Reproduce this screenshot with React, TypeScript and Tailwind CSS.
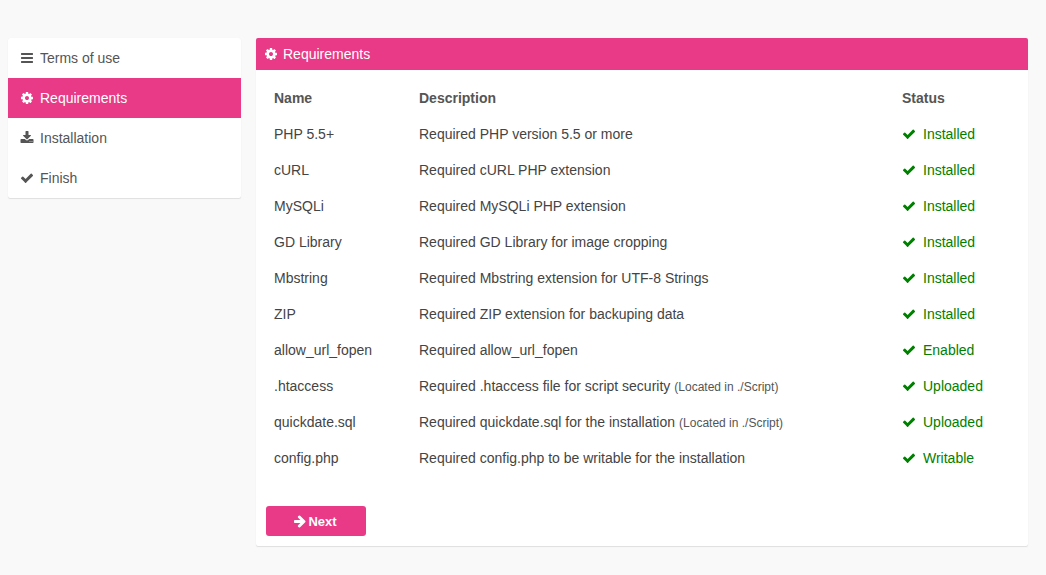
const icons = {
  bars: 'M1664 1344v128q0 26-19 45t-45 19h-1408q-26 0-45-19t-19-45v-128q0-26 19-45t45-19h1408q26 0 45 19t19 45zm0-512v128q0 26-19 45t-45 19h-1408q-26 0-45-19t-19-45v-128q0-26 19-45t45-19h1408q26 0 45 19t19 45zm0-512v128q0 26-19 45t-45 19h-1408q-26 0-45-19t-19-45v-128q0-26 19-45t45-19h1408q26 0 45 19t19 45z',
  cog: 'M1152 896q0-106-75-181t-181-75-181 75-75 181 75 181 181 75 181-75 75-181zm512-109v222q0 12-8 23t-20 13l-185 28q-19 54-39 91 35 50 107 138 10 12 10 25t-9 23q-27 37-99 108t-94 71q-12 0-26-9l-138-108q-44 23-91 38-16 136-29 186-7 28-36 28h-222q-14 0-24.5-8.5t-11.5-21.5l-28-184q-49-16-90-37l-141 107q-10 9-25 9-14 0-25-11-126-114-165-168-7-10-7-23 0-12 8-23 15-21 51-66.5t54-70.5q-27-50-41-99l-183-27q-13-2-21-12.5t-8-23.5v-222q0-12 8-23t19-13l186-28q14-46 39-92-40-57-107-138-10-12-10-24 0-10 9-23 26-36 98.5-107.5t94.5-71.5q13 0 26 10l138 107q44-23 91-38 16-136 29-186 7-28 36-28h222q14 0 24.5 8.5t11.5 21.5l28 184q49 16 90 37l142-107q9-9 24-9 13 0 25 10 129 119 165 170 7 8 7 22 0 12-8 23-15 21-51 66.5t-54 70.5q26 50 41 98l183 28q13 2 21 12.5t8 23.5z',
  download: 'M1344 1344q0-26-19-45t-45-19-45 19-19 45 19 45 45 19 45-19 19-45zm256 0q0-26-19-45t-45-19-45 19-19 45 19 45 45 19 45-19 19-45zm128-224v320q0 40-28 68t-68 28h-1472q-40 0-68-28t-28-68v-320q0-40 28-68t68-28h465l135 136q58 56 136 56t136-56l136-136h464q40 0 68 28t28 68zm-325-569q17 41-14 70l-448 448q-18 19-45 19t-45-19l-448-448q-31-29-14-70 17-39 59-39h256v-448q0-26 19-45t45-19h256q26 0 45 19t19 45v448h256q42 0 59 39z',
  check: 'M1671 566q0 40-28 68l-724 724-136 136q-28 28-68 28t-68-28l-136-136-362-362q-28-28-28-68t28-68l136-136q28-28 68-28t68 28l294 295 656-657q28-28 68-28t68 28l136 136q28 28 28 68z',
  arrow: 'M1600 960q0 54-37 91l-651 651q-39 37-91 37-51 0-90-37l-75-75q-38-38-38-91t38-91l293-293h-704q-52 0-84.5-37.5t-32.5-90.5v-128q0-53 32.5-90.5t84.5-37.5h704l-293-294q-38-36-38-90t38-90l75-75q38-38 90-38 53 0 91 38l651 651q37 35 37 90z',
}

function Icon({ name }: { name: keyof typeof icons }) {
  return (
    <svg viewBox="0 0 1792 1792" className="h-3.5 w-3.5 shrink-0 fill-current">
      <path d={icons[name]} />
    </svg>
  )
}

const steps: { label: string; icon: keyof typeof icons; active?: boolean }[] = [
  { label: 'Terms of use', icon: 'bars' },
  { label: 'Requirements', icon: 'cog', active: true },
  { label: 'Installation', icon: 'download' },
  { label: 'Finish', icon: 'check' },
]

const requirements = [
  { name: 'PHP 5.5+', description: 'Required PHP version 5.5 or more', status: 'Installed' },
  { name: 'cURL', description: 'Required cURL PHP extension', status: 'Installed' },
  { name: 'MySQLi', description: 'Required MySQLi PHP extension', status: 'Installed' },
  { name: 'GD Library', description: 'Required GD Library for image cropping', status: 'Installed' },
  { name: 'Mbstring', description: 'Required Mbstring extension for UTF-8 Strings', status: 'Installed' },
  { name: 'ZIP', description: 'Required ZIP extension for backuping data', status: 'Installed' },
  { name: 'allow_url_fopen', description: 'Required allow_url_fopen', status: 'Enabled' },
  { name: '.htaccess', description: 'Required .htaccess file for script security', note: '(Located in ./Script)', status: 'Uploaded' },
  { name: 'quickdate.sql', description: 'Required quickdate.sql for the installation', note: '(Located in ./Script)', status: 'Uploaded' },
  { name: 'config.php', description: 'Required config.php to be writable for the installation', status: 'Writable' },
]

export default function App() {
  return (
    <div className="min-h-[575px] bg-[#f9f9f9] pt-[38px] pl-2 font-['Liberation_Sans',Arial,sans-serif] text-sm text-[#444]">
      <div className="flex items-start gap-[15px]">
        <nav className="w-[233px] rounded-[2px] bg-white shadow-[0_1px_1px_rgba(0,0,0,0.1),0_0_1px_rgba(0,0,0,0.06)]">
          {steps.map((step) => (
            <div
              key={step.label}
              className={
                step.active
                  ? 'flex h-10 items-center gap-1.5 bg-[#e83a87] pl-3 text-white'
                  : 'flex h-10 items-center gap-1.5 pl-3 text-[#555]'
              }
            >
              <Icon name={step.icon} />
              <span>{step.label}</span>
            </div>
          ))}
        </nav>

        <main className="h-[508px] w-[772px] rounded-[2px] bg-white shadow-[0_1px_1px_rgba(0,0,0,0.1),0_0_1px_rgba(0,0,0,0.06)]">
          <div className="flex h-8 items-center gap-[5px] rounded-t-[2px] bg-[#e83a87] pl-2 text-white">
            <Icon name="cog" />
            <span>Requirements</span>
          </div>

          <div className="px-2.5 pt-2.5">
            <table className="w-full table-fixed border-collapse text-left">
              <colgroup>
                <col className="w-[145px]" />
                <col className="w-[483px]" />
                <col />
              </colgroup>
              <thead>
                <tr className="h-9">
                  <th className="px-2 font-bold text-[#555]">Name</th>
                  <th className="px-2 font-bold text-[#555]">Description</th>
                  <th className="px-2 font-bold text-[#555]">Status</th>
                </tr>
              </thead>
              <tbody>
                {requirements.map((row) => (
                  <tr key={row.name} className="h-9">
                    <td className="px-2">{row.name}</td>
                    <td className="px-2">
                      {row.description}
                      {row.note && <small className="ml-1 text-xs text-[#555]">{row.note}</small>}
                    </td>
                    <td className="px-2 text-[#008000]">
                      <span className="flex items-center gap-[7px]">
                        <Icon name="check" />
                        {row.status}
                      </span>
                    </td>
                  </tr>
                ))}
              </tbody>
            </table>

            <button className="mt-[30px] flex h-[30px] w-[100px] items-center justify-center gap-px rounded-[3px] bg-[#e83a87] pr-0.5 text-[13px] font-bold text-white">
              <Icon name="arrow" />
              <span className="relative top-px">Next</span>
            </button>
          </div>
        </main>
      </div>
    </div>
  )
}
